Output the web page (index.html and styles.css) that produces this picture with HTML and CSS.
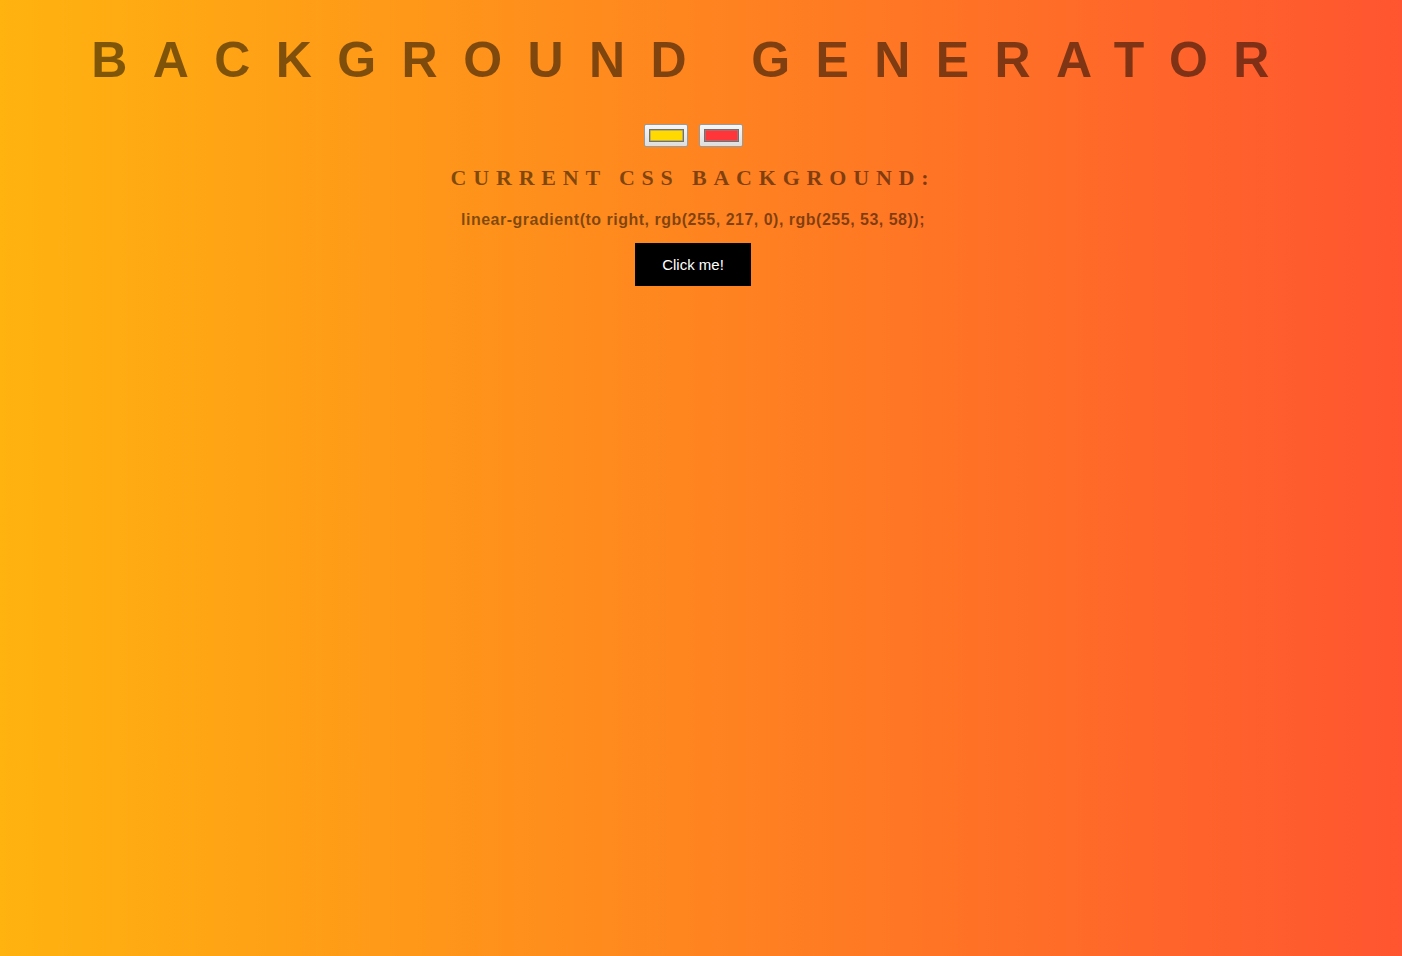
FILE: index.html
```html
<!DOCTYPE html>
<html lang="en">
<head>
<meta charset="utf-8">
<title>Background Generator</title>
<link rel="stylesheet" href="styles.css">
</head>
<body class="page">
  <h1 class="title">Background Generator</h1>
  <div class="pickers">
    <span class="picker"><span class="swatch swatch-yellow"></span></span>
    <span class="picker"><span class="swatch swatch-red"></span></span>
  </div>
  <h2 class="subtitle">Current CSS Background:</h2>
  <h3 class="css-text">linear-gradient(to right, rgb(255, 217, 0), rgb(255, 53, 58));</h3>
  <button class="btn">Click me!</button>
</body>
</html>
```

FILE: styles.css
```css
html, body {
  margin: 0;
  padding: 0;
}

.page {
  box-sizing: border-box;
  min-height: 100vh;
  padding: 0 16px 0 0;
  background: linear-gradient(to right, #ffb30f, #ff5530);
  color: rgba(0, 0, 0, 0.5);
  text-align: center;
  display: flex;
  flex-direction: column;
  align-items: center;
}

.title {
  margin: 31px 0 0 0;
  font: bold 50px/58px "Liberation Sans", Arial, sans-serif;
  text-transform: uppercase;
  letter-spacing: 25.4px;
  width: 100%;
}

.pickers {
  margin-top: 35px;
  display: flex;
  gap: 11px;
}

.picker {
  box-sizing: border-box;
  width: 44px;
  height: 23px;
  border: 1px solid #9a9a9a;
  border-radius: 2px;
  background: linear-gradient(#f6f6f6, #dddddd);
  padding: 4px 3px 4px 4px;
  display: flex;
}

.swatch {
  flex: 1;
  box-sizing: border-box;
  border: 1px solid #707070;
  box-shadow: inset 0 0 0 0.5px #8a8a8a;
}

.swatch-yellow { background: #ffd900; }
.swatch-red { background: #ff353a; }

.subtitle {
  margin: 18px 0 0 0;
  font: bold 22px/26px "Liberation Serif", "Times New Roman", serif;
  text-transform: uppercase;
  letter-spacing: 6.8px;
}

.css-text {
  margin: 20px 0 0 0;
  font: bold 16px/18px "Liberation Sans", Arial, sans-serif;
  letter-spacing: 0.5px;
}

.btn {
  margin-top: 14px;
  width: 116px;
  height: 43px;
  background: #000;
  color: #fff;
  border: none;
  font: 15px "Liberation Sans", Arial, sans-serif;
  padding: 0;
}
```
